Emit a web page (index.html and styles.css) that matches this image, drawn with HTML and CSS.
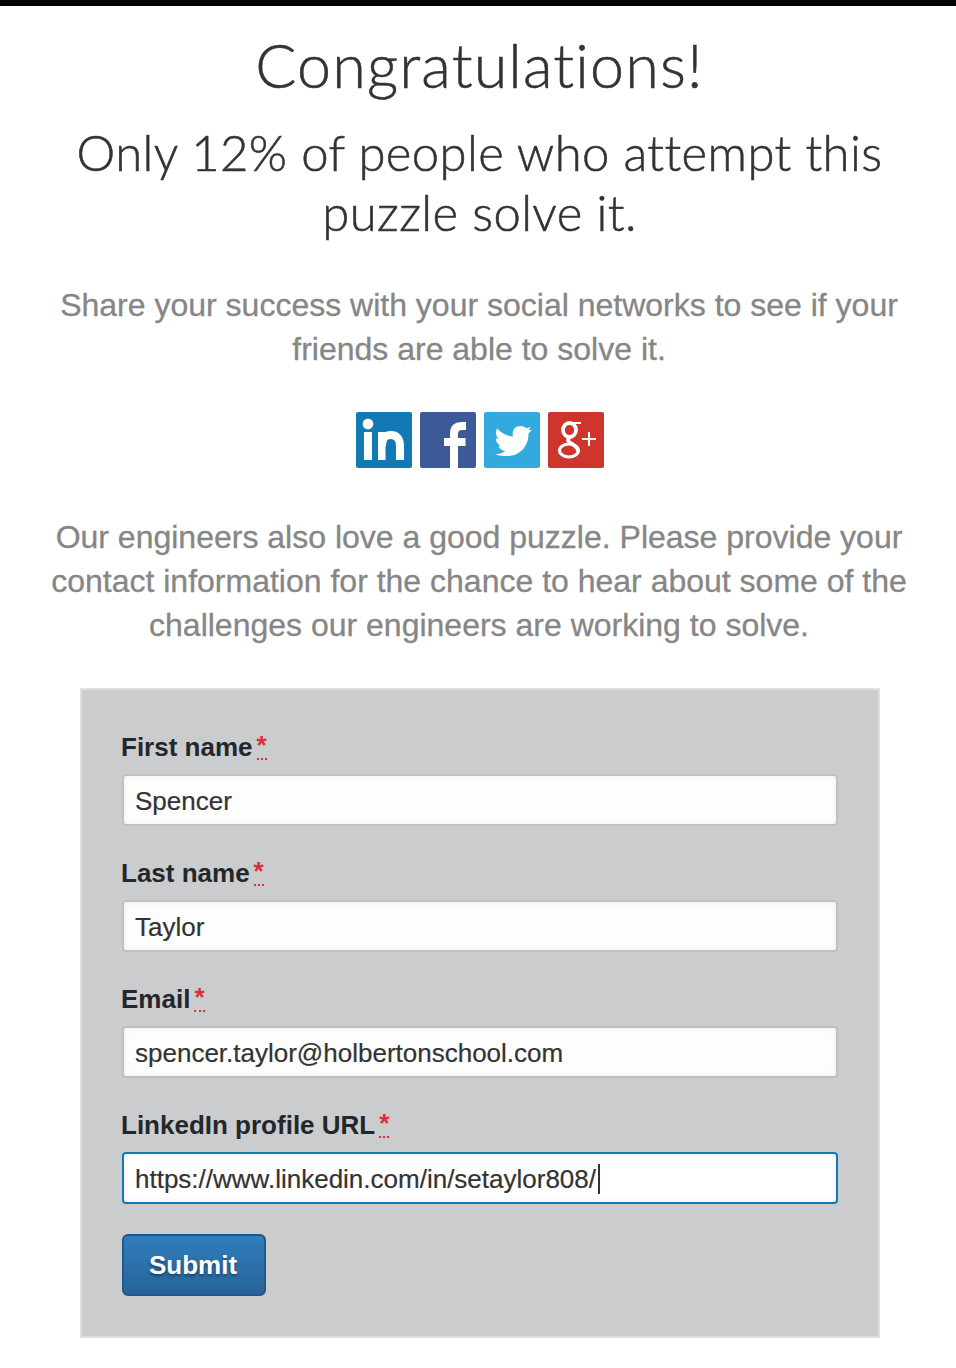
FILE: index.html
```html
<!DOCTYPE html>
<html lang="en">
<head>
<meta charset="utf-8">
<title>Congratulations!</title>
<link rel="stylesheet" href="styles.css">
</head>
<body>
<main class="page">
  <h1 class="title">Congratulations!</h1>
  <h2 class="subtitle">Only 12% of people who attempt this<br>puzzle solve it.</h2>
  <p class="copy share">Share your success with your social networks to see if your<br>friends are able to solve it.</p>
  <nav class="social">
    <a class="social-link" aria-label="LinkedIn"><svg viewBox="0 0 56 56"><rect width="56" height="56" rx="2" fill="#1279b5"/><g fill="#fff"><circle cx="12" cy="12" r="5.400"/><rect x="8" y="20" width="8" height="28"/><rect x="22" y="20" width="7.500" height="28"/></g><path d="M26 34c0-7 2.500-11 9-11c6 0 9 4 9 11v14" fill="none" stroke="#fff" stroke-width="8"/></svg></a>
    <a class="social-link" aria-label="Facebook"><svg viewBox="0 0 56 56"><rect width="56" height="56" rx="2" fill="#3d5a98"/><path d="M46 14h-4q-8 0-8 8v34M24 30h21.500" fill="none" stroke="#fff" stroke-width="8"/></svg></a>
    <a class="social-link" aria-label="Twitter"><svg viewBox="0 0 56 56"><rect width="56" height="56" rx="2" fill="#33aadf"/><path d="M13 16.500c4 4.500 10 7.500 16 8c-1.500-6 2-10.500 7.500-10.500c2.700 0 4.500 1 5.700 2.300l4.300-1.300-2 3.200 3.300-.5-3.300 3.800c.3 13-9 22.500-20 22.500-5 0-9.500-.5-13.500-1.500c4-.3 8-1.500 10.500-3.500c-3.700-.4-6.200-2.500-7-5.300h2.500c-3.500-1.300-5.300-4.300-5.200-7.500l2.800.5c-2.800-2.700-3.300-6.700-1.600-10.200z" fill="#fff"/></svg></a>
    <a class="social-link" aria-label="Google Plus"><svg viewBox="0 0 56 56"><rect width="56" height="56" rx="2" fill="#ce352c"/><g fill="none" stroke="#fff"><ellipse cx="21.500" cy="18" rx="6.500" ry="7" stroke-width="3.800"/><path d="M22 11h11" stroke-width="2"/><path d="M22 25c-4 4-1 5 3 7.500c3 2 5 3.500 5 7" stroke-width="3.800"/><ellipse cx="21" cy="38.500" rx="9.500" ry="6.500" stroke-width="3"/><path d="M34 27h14M41 20v14" stroke-width="2"/></g></svg></a>
  </nav>
  <p class="copy contact">Our engineers also love a good puzzle. Please provide your<br>contact information for the chance to hear about some of the<br>challenges our engineers are working to solve.</p>
  <form class="form">
    <div class="field"><label class="label" for="first">First name<abbr class="req">*</abbr></label><input class="input" id="first" value="Spencer"></div>
    <div class="field"><label class="label" for="last">Last name<abbr class="req">*</abbr></label><input class="input" id="last" value="Taylor"></div>
    <div class="field"><label class="label" for="email">Email<abbr class="req">*</abbr></label><input class="input" id="email" value="spencer.taylor@holbertonschool.com"></div>
    <div class="field last"><label class="label">LinkedIn profile URL<abbr class="req">*</abbr></label><div class="input active">https://www.linkedin.com/in/setaylor808/<i class="caret"></i></div></div>
    <button class="submit" type="button">Submit</button>
  </form>
</main>
</body>
</html>
```
FILE: styles.css
```css
* { box-sizing: border-box; }
body { margin: 0; background: #fff; font-family: "Liberation Sans", Arial, sans-serif; }
.page { height: 1368px; border-top: 6px solid #000006; padding-top: 23px; text-align: center; overflow: hidden; }
.title, .subtitle { margin: 0; padding-left: 3px; color: #333; font-family: Lato, sans-serif; font-weight: 300; white-space: nowrap; -webkit-text-stroke: .55px #333; }
.title { font-size: 61px; line-height: 72px; letter-spacing: 1.15px; }
.subtitle { margin-top: 21px; font-size: 49px; line-height: 60px; letter-spacing: .4px; }
.copy { margin: 0; padding-left: 2px; color: #868686; font-size: 32px; line-height: 44px; white-space: nowrap; -webkit-text-stroke: .3px #868686; }
.share { margin-top: 41px; }
.social { display: flex; justify-content: center; gap: 8px; margin: 41px 0 0 4px; }
.social-link, .social-link svg { display: block; width: 56px; height: 56px; }
.contact { margin-top: 47px; }
.form { width: 800px; height: 650px; margin: 41px 0 0 80px; border: 2px solid #dedfe0; background: #cbccce; padding: 42px 40px 0; text-align: left; }
.field { height: 126px; }
.last { height: 124px; }
.label { display: block; height: 42px; margin-left: -1px; color: #23272b; font-size: 26px; font-weight: 700; line-height: 30px; white-space: nowrap; }
.req { display: inline-block; height: 28px; margin-left: 4px; border-bottom: 2px dotted #dd2e3b; color: #dd2e3b; line-height: 27px; vertical-align: top; text-decoration: none; }
.input { display: block; width: 716px; height: 52px; border: 2px solid #bfc0c2; border-radius: 4px; outline: 0; background: #fdfdfd; box-shadow: inset 0 0 6px #ececec; padding: 2px 11px 0; color: #333; font: 26px/46px "Liberation Sans", Arial, sans-serif; -webkit-text-stroke: .2px #333; }
.active { display: flex; align-items: center; border-color: #1279b5; background: #fff; }
.caret { width: 2px; height: 30px; margin-left: 2px; background: #333; }
.submit { display: block; width: 144px; height: 62px; border: 2px solid #20588a; border-radius: 6px; background: linear-gradient(#307dbd, #286399); padding: 0 2px 0 0; color: #fff; font: 700 26px/58px "Liberation Sans", Arial, sans-serif; text-shadow: 0 2px 3px rgba(0, 0, 0, .4); }
```
